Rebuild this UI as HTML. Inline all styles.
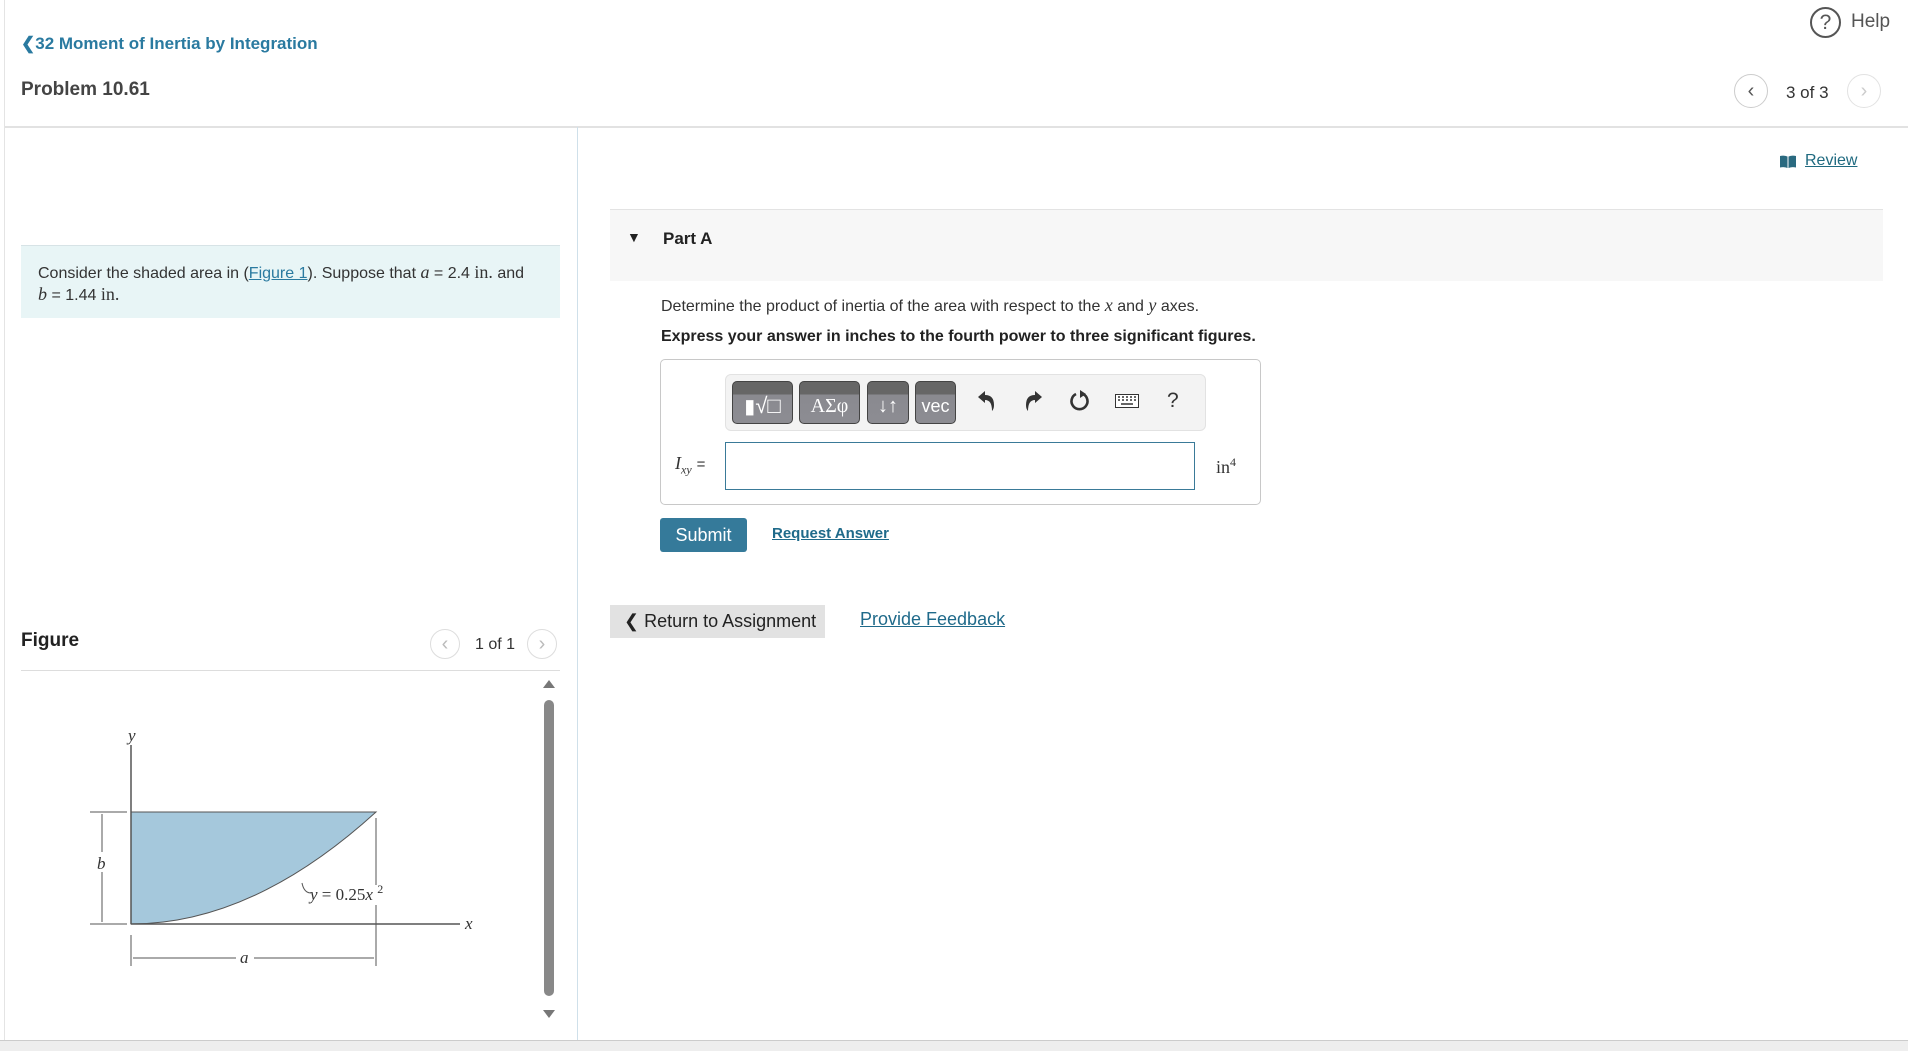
<!DOCTYPE html>
<html><head><meta charset="utf-8"><style>
*{box-sizing:border-box;margin:0;padding:0}
body{width:1908px;height:1051px;background:#fff;font-family:"Liberation Sans",Arial,sans-serif;color:#333;position:relative;overflow:hidden}
.a{position:absolute;white-space:nowrap}
.link{color:#2a7aa0;text-decoration:underline}
.circ{position:absolute;width:34px;height:34px;border:1px solid #ccc;border-radius:50%;text-align:center;line-height:32px;font-size:20px;color:#555}
.btn{position:absolute;top:6px;height:43px;border-radius:5px;background:linear-gradient(#666 0,#666 30%,#8a8a90 31%,#8c8c92 100%);border:1px solid #444;color:#fff;text-align:center;line-height:48px;font-size:20px}
.ic{position:absolute;top:14px}
.m{font-family:"Liberation Serif",serif;font-style:italic}
</style></head><body>
<div class="a" style="left:4px;top:0;width:1px;height:1040px;background:#e4e4e4"></div>
<div class="a" style="left:1810px;top:7px;width:31px;height:31px;border:2px solid #555;border-radius:50%;text-align:center;line-height:28px;font-size:21px;color:#555">?</div>
<div class="a" style="left:1851px;top:11px;font-size:19px;color:#555">Help</div>
<div class="a" style="left:21px;top:34px;font-size:17px;font-weight:bold;color:#2a7aa0">&#10094;32 Moment of Inertia by Integration</div>
<div class="a" style="left:21px;top:79px;font-size:19px;font-weight:bold;color:#444">Problem 10.61</div>
<div class="circ" style="left:1734px;top:74px">&#8249;</div>
<div class="a" style="left:1786px;top:83px;font-size:17px">3 of 3</div>
<div class="circ" style="left:1847px;top:74px;color:#ccc;border-color:#e2e2e2">&#8250;</div>
<div class="a" style="left:5px;top:126px;width:1903px;height:2px;background:#e2e2e2"></div>
<div class="a" style="left:577px;top:127px;width:1px;height:913px;background:#cfe0ea"></div>
<svg class="a" style="left:1780px;top:155px" width="16" height="13"><path d="M0 1 Q4 0 7.5 1.5 V13 Q4 11.5 0 12.5 Z M8.5 1.5 Q12 0 16 1 V12.5 Q12 11.5 8.5 13 Z" fill="#2a6a80"/></svg>
<div class="a link" style="left:1805px;top:152px;font-size:16px;color:#1f6a80">Review</div>
<div class="a" style="left:21px;top:245px;width:539px;height:73px;background:#e8f5f6;border-top:1px solid #d7e3e6"></div>
<div class="a" style="left:38px;top:262px;font-size:16px;line-height:20px">Consider the shaded area in (<span class="link">Figure 1</span>). Suppose that <span class="m" style="font-size:18px">a</span> = 2.4 <span style="font-family:'Liberation Serif',serif;font-size:18px">in.</span> and<br><span class="m" style="font-size:18px">b</span> = 1.44 <span style="font-family:'Liberation Serif',serif;font-size:18px">in.</span></div>
<div class="a" style="left:610px;top:209px;width:1273px;height:72px;background:#f7f7f7;border-top:1px solid #e3e3e3"></div>
<div class="a" style="left:627px;top:229px;font-size:14px;color:#222">&#9660;</div>
<div class="a" style="left:663px;top:229px;font-size:17px;font-weight:bold;color:#222">Part A</div>
<div class="a" style="left:661px;top:295px;font-size:16px">Determine the product of inertia of the area with respect to the <span class="m" style="font-size:18px">x</span> and <span class="m" style="font-size:18px">y</span> axes.</div>
<div class="a" style="left:661px;top:328px;font-size:16px;font-weight:bold;color:#222">Express your answer in inches to the fourth power to three significant figures.</div>
<div class="a" style="left:660px;top:359px;width:601px;height:146px;border:1px solid #c8c8c8;border-radius:5px"></div>
<div class="a" style="left:725px;top:374px;width:481px;height:57px;background:#f3f3f3;border:1px solid #e2e2e2;border-radius:6px">
 <div class="btn" style="left:6px;width:61px">&#9646;<span style="font-size:22px">&#8730;&#9633;</span></div>
 <div class="btn" style="left:73px;width:61px;font-family:'Liberation Serif',serif">ΑΣφ</div>
 <div class="btn" style="left:141px;width:42px">&#8595;&#8593;</div>
 <div class="btn" style="left:189px;width:41px;font-size:18px">vec</div>
 <svg class="ic" style="left:250px" width="20" height="24" viewBox="0 0 20 24"><path d="M2 8 L9 2 V6 Q18 6 18 16 Q18 20 16 22 Q16 11 9 11 V14 Z" fill="#333"/></svg>
 <svg class="ic" style="left:298px" width="20" height="24" viewBox="0 0 20 24"><path d="M18 8 L11 2 V6 Q2 6 2 16 Q2 20 4 22 Q4 11 11 11 V14 Z" fill="#333"/></svg>
 <svg class="ic" style="left:343px" width="22" height="24" viewBox="0 0 22 24"><path d="M14 5 A8 8 0 1 1 7 5" fill="none" stroke="#333" stroke-width="2.6"/><path d="M11 1 L17 5 L11 9 Z" fill="#333"/></svg>
 <svg class="ic" style="left:389px;top:19px" width="24" height="14" viewBox="0 0 24 14"><rect x="0.5" y="0.5" width="23" height="13" fill="#fff" stroke="#333"/><path d="M3 3h2M7 3h2M11 3h2M15 3h2M19 3h2M3 6h2M7 6h2M11 6h2M15 6h2M19 6h2M6 10h12" stroke="#333" stroke-width="1.6"/></svg>
 <div class="a" style="left:441px;top:14px;font-size:21px;color:#333">?</div>
</div>
<div class="a" style="left:675px;top:453px;font-size:18px"><span class="m">I<sub style="font-size:12px">xy</sub></span> <span style="font-size:15px">=</span></div>
<div class="a" style="left:725px;top:442px;width:470px;height:48px;border:1px solid #3a7a98"></div>
<div class="a" style="left:1216px;top:455px;font-family:'Liberation Serif',serif;font-size:18px">in<sup style="font-size:12px">4</sup></div>
<div class="a" style="left:660px;top:518px;width:87px;height:34px;background:#357a9a;border-radius:3px;color:#fff;font-size:18px;text-align:center;line-height:34px">Submit</div>
<div class="a link" style="left:772px;top:525px;font-size:15px;font-weight:bold;color:#1f6a8a">Request Answer</div>
<div class="a" style="left:610px;top:605px;width:215px;height:33px;background:#e2e2e2;font-size:18px;line-height:33px;padding-left:14px;color:#222">&#10094; Return to Assignment</div>
<div class="a link" style="left:860px;top:609px;font-size:18px;color:#1f6a8a">Provide Feedback</div>
<div class="a" style="left:21px;top:630px;font-size:19px;font-weight:bold;color:#222">Figure</div>
<div class="circ" style="left:430px;top:629px;width:30px;height:30px;line-height:28px;color:#bbb;border-color:#ddd">&#8249;</div>
<div class="a" style="left:475px;top:636px;font-size:16px">1 of 1</div>
<div class="circ" style="left:527px;top:629px;width:30px;height:30px;line-height:28px;color:#bbb;border-color:#ddd">&#8250;</div>
<div class="a" style="left:21px;top:670px;width:539px;height:1px;background:#ddd"></div>
<svg class="a" style="left:0;top:0" width="580" height="1040">
 <path d="M131 812 L376 812 Q253 924 131 924 Z" fill="#a5c8dc" stroke="#555" stroke-width="1"/>
 <line x1="131" y1="745" x2="131" y2="924" stroke="#555" stroke-width="1.5"/>
 <line x1="131" y1="924" x2="460" y2="924" stroke="#555" stroke-width="1.5"/>
 <line x1="90" y1="812" x2="127" y2="812" stroke="#555"/>
 <line x1="90" y1="924" x2="127" y2="924" stroke="#555"/>
 <line x1="102" y1="814" x2="102" y2="852" stroke="#555"/><line x1="102" y1="872" x2="102" y2="922" stroke="#555"/>
 <line x1="376" y1="818" x2="376" y2="885" stroke="#555"/><line x1="376" y1="905" x2="376" y2="966" stroke="#555"/>
 <line x1="131" y1="935" x2="131" y2="966" stroke="#555"/>
 <line x1="133" y1="958" x2="236" y2="958" stroke="#555"/><line x1="254" y1="958" x2="374" y2="958" stroke="#555"/>
 <path d="M302 883 q2 10 9 10" fill="none" stroke="#555"/>
 <g font-family="Liberation Serif,serif" font-style="italic" font-size="17" fill="#333">
  <text x="128" y="741">y</text>
  <text x="97" y="869">b</text>
  <text x="240" y="963">a</text>
  <text x="465" y="929">x</text>
  <text x="310" y="900" font-style="normal"><tspan font-style="italic">y</tspan> = 0.25<tspan font-style="italic">x</tspan> <tspan font-size="12" dy="-7">2</tspan></text>
 </g>
 <path d="M549 680 l-6 8 h12 z M549 1018 l-6 -8 h12 z" fill="#777"/>
 <rect x="544" y="700" width="10" height="296" rx="5" fill="#888"/>
</svg>
<div class="a" style="left:0;top:1040px;width:1908px;height:11px;background:#eee;border-top:1px solid #ccc"></div>
</body></html>
